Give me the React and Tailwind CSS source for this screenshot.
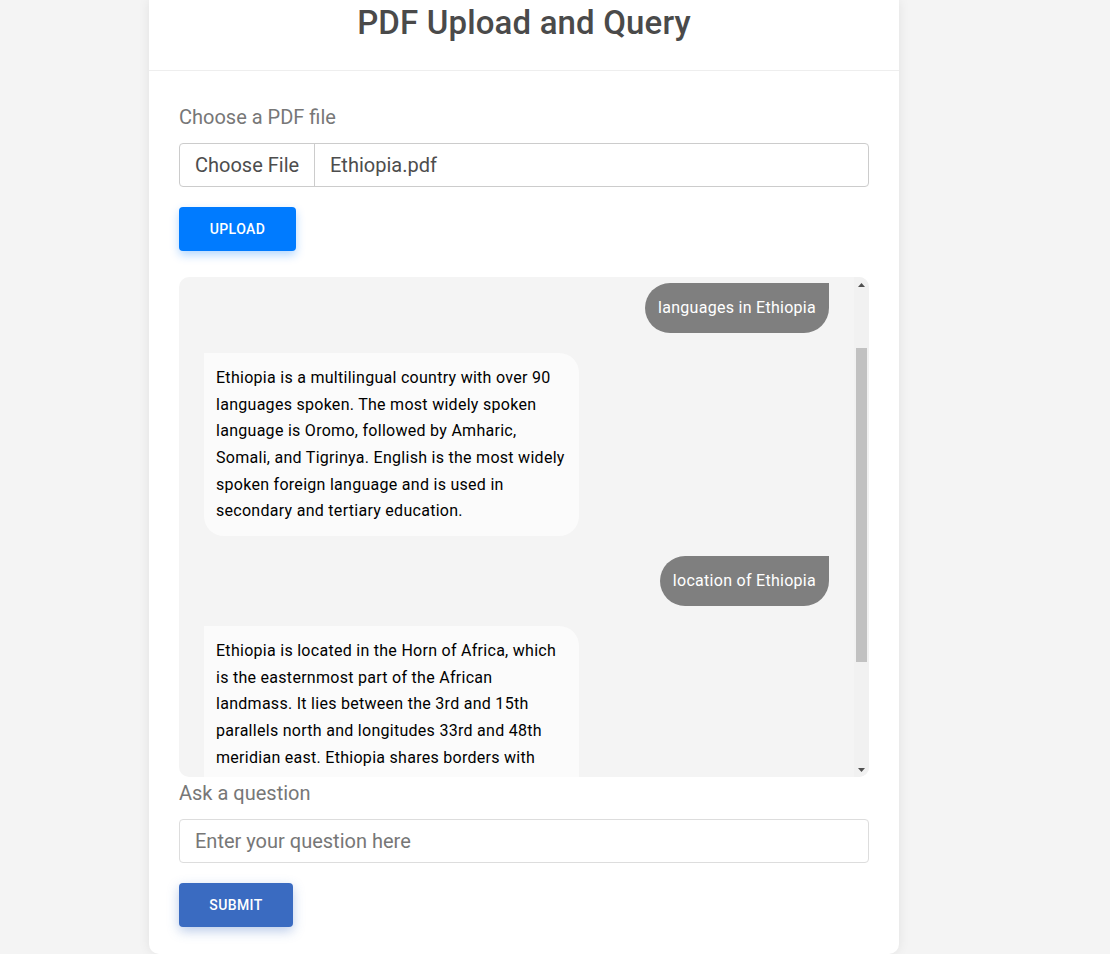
import React, { useEffect, useRef } from "react";

const messages = [
	{ from: "user", text: "what is this document about" },
	{ from: "user", text: "languages in Ethiopia", mark: true },
	{
		from: "bot",
		text: "Ethiopia is a multilingual country with over 90 languages spoken. The most widely spoken language is Oromo, followed by Amharic, Somali, and Tigrinya. English is the most widely spoken foreign language and is used in secondary and tertiary education.",
	},
	{ from: "user", text: "location of Ethiopia" },
	{
		from: "bot",
		text: "Ethiopia is located in the Horn of Africa, which is the easternmost part of the African landmass. It lies between the 3rd and 15th parallels north and longitudes 33rd and 48th meridian east. Ethiopia shares borders with Eritrea to the north, Djibouti and Somalia to the east, Kenya to the south, and Sudan and South Sudan to the west.",
	},
];

const Arrow = ({ down }) => (
	<div className="h-[15px] flex items-center justify-center">
		<svg width="7" height="4" viewBox="0 0 7 4">
			<path d={down ? "M0 0 L7 0 L3.5 4 Z" : "M0 4 L7 4 L3.5 0 Z"} fill="#505050" />
		</svg>
	</div>
);

const App = () => {
	const chatRef = useRef(null);
	const markRef = useRef(null);

	useEffect(() => {
		if (chatRef.current && markRef.current) {
			chatRef.current.scrollTop = markRef.current.offsetTop - 6;
		}
	}, []);

	return (
		<div className="min-h-screen bg-[#f4f4f4] font-['Roboto',sans-serif]">
			<div className="ml-[149px] w-[750px] bg-white rounded-b-[10px] shadow-[0_0_12px_rgba(0,0,0,0.08)]">
				<div className="h-[71px] border-b border-[#eeeeee] pt-[4px]">
					<h1 className="text-center text-[33px] leading-[38px] font-medium tracking-[0.15px] text-[#4a4a4a]">
						PDF Upload and Query
					</h1>
				</div>

				<div className="px-[30px] pt-[34px] pb-[27px]">
					<div className="text-[20px] leading-[24px] text-[#777777] mb-[14px]">
						Choose a PDF file
					</div>
					<div className="h-[44px] border border-[#cccccc] rounded-[4px] flex items-center text-[20px] text-[#4d4d4d]">
						<div className="w-[135px] h-full flex items-center px-[15px] border-r border-[#cccccc] whitespace-nowrap">
							Choose File
						</div>
						<div className="px-[15px]">Ethiopia.pdf</div>
					</div>
					<button className="mt-[20px] h-[44px] w-[117px] bg-[#007bff] rounded-[4px] text-white text-[14px] font-medium tracking-[0.4px] shadow-[0_4px_10px_rgba(0,123,255,0.3)]">
						UPLOAD
					</button>

					<div className="mt-[26px] h-[500px] flex bg-[#f4f4f4] rounded-[10px] overflow-hidden">
						<div
							ref={chatRef}
							className="relative flex-1 overflow-hidden px-[25px] py-[10px]"
						>
							<div className="flex flex-col gap-[20px] text-[16px] tracking-[0.28px]">
								{messages.map((m, i) =>
									m.from === "user" ? (
										<div
											key={i}
											ref={m.mark ? markRef : null}
											className="self-end h-[50px] leading-[50px] px-[13px] bg-[#7f7f7f] text-white rounded-[25px] rounded-tr-none"
										>
											{m.text}
										</div>
									) : (
										<div
											key={i}
											className="self-start max-w-[60%] bg-[#fbfbfb] text-black leading-[26.67px] px-[12px] pt-[12px] pb-[11px] rounded-[20px] rounded-tl-none"
										>
											{m.text}
										</div>
									)
								)}
							</div>
						</div>
						<div className="w-[15px] bg-[#f1f1f1] flex flex-col">
							<Arrow />
							<div className="flex-1 px-[2px]">
								<div className="mt-[56px] h-[314px] bg-[#c1c1c1]" />
							</div>
							<Arrow down />
						</div>
					</div>

					<div className="mt-[4px] text-[20px] leading-[24px] text-[#777777] mb-[14px]">
						Ask a question
					</div>
					<input
						type="text"
						placeholder="Enter your question here"
						className="w-full h-[44px] border border-[#dddddd] rounded-[4px] px-[15px] text-[20px] placeholder:text-[#777777] outline-none"
					/>
					<button className="mt-[20px] h-[44px] w-[114px] bg-[#3a6bc1] rounded-[4px] text-white text-[14px] font-medium tracking-[0.4px] shadow-[0_4px_12px_rgba(58,107,193,0.35)]">
						SUBMIT
					</button>
				</div>
			</div>
		</div>
	);
};

export default App;
